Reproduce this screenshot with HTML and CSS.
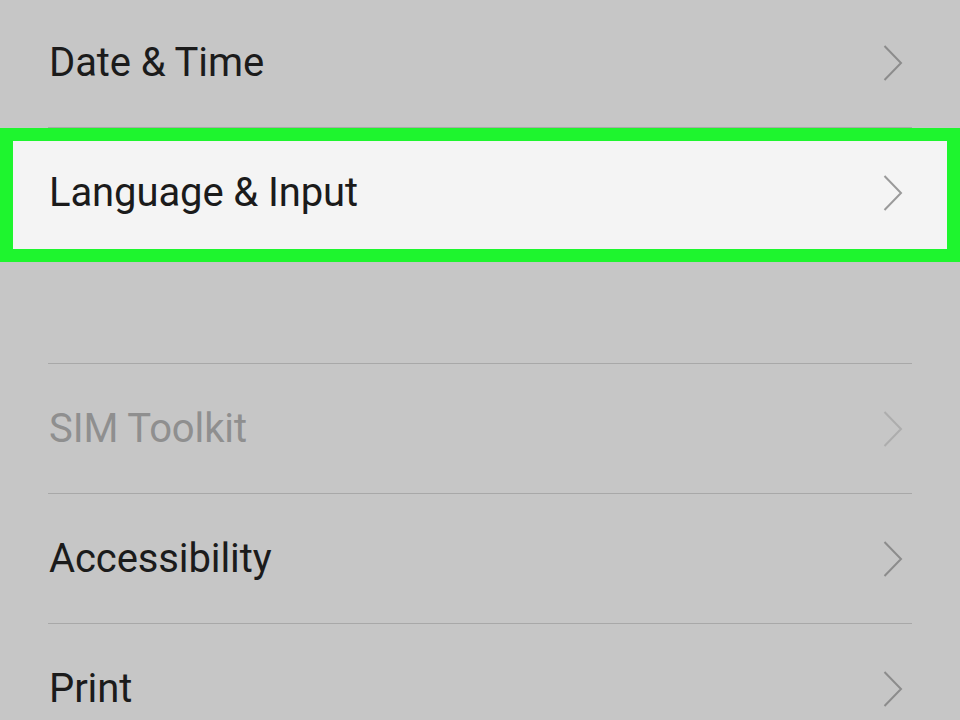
FILE: index.html
```html
<!DOCTYPE html>
<html lang="en">
<head>
<meta charset="utf-8">
<title>Settings</title>
<link rel="stylesheet" href="styles.css">
</head>
<body>
<div class="list">
  <div class="row">
    <span class="label">Date &amp; Time</span>
    <svg class="chev" width="20" height="36" viewBox="0 0 20 36"><polyline points="1.5,1 18,18 1.5,35" fill="none" stroke="#8c8c8c" stroke-width="2"/></svg>
  </div>
  <div class="row row-hl">
    <span class="label">Language &amp; Input</span>
    <svg class="chev" width="20" height="36" viewBox="0 0 20 36"><polyline points="1.5,1 18,18 1.5,35" fill="none" stroke="#9a9a9a" stroke-width="2"/></svg>
  </div>
  <div class="spacer"></div>
  <div class="row row-disabled">
    <span class="label">SIM Toolkit</span>
    <svg class="chev" width="20" height="36" viewBox="0 0 20 36"><polyline points="1.5,1 18,18 1.5,35" fill="none" stroke="#adadad" stroke-width="2"/></svg>
  </div>
  <div class="row">
    <span class="label">Accessibility</span>
    <svg class="chev" width="20" height="36" viewBox="0 0 20 36"><polyline points="1.5,1 18,18 1.5,35" fill="none" stroke="#8c8c8c" stroke-width="2"/></svg>
  </div>
  <div class="row">
    <span class="label">Print</span>
    <svg class="chev" width="20" height="36" viewBox="0 0 20 36"><polyline points="1.5,1 18,18 1.5,35" fill="none" stroke="#8c8c8c" stroke-width="2"/></svg>
  </div>
</div>
</body>
</html>
```
FILE: styles.css
```css
html, body {
  margin: 0;
  padding: 0;
  background: #c6c6c6;
  overflow: hidden;
}
body {
  width: 960px;
  height: 720px;
  font-family: Roboto, "Liberation Sans", sans-serif;
}
.list {
  padding: 0 48px;
  margin-top: -2px;
}
.row {
  position: relative;
  z-index: 0;
  height: 129px;
  border-bottom: 1px solid #a8a8a8;
  display: flex;
  align-items: center;
  justify-content: space-between;
  padding: 0 9px 0 1px;
}
.label {
  font-size: 40px;
  color: #1b1b1b;
  letter-spacing: -0.1px;
}
.chev {
  display: block;
}
.row-hl::before {
  content: "";
  position: absolute;
  z-index: -1;
  left: -48px;
  right: -48px;
  top: 0;
  height: 134px;
  box-sizing: border-box;
  border: 13px solid #1ef52e;
  background: #f4f4f4;
}
.spacer {
  height: 105px;
  border-bottom: 1px solid #a8a8a8;
}
.row-disabled .label {
  color: #8f8f8f;
}
```
